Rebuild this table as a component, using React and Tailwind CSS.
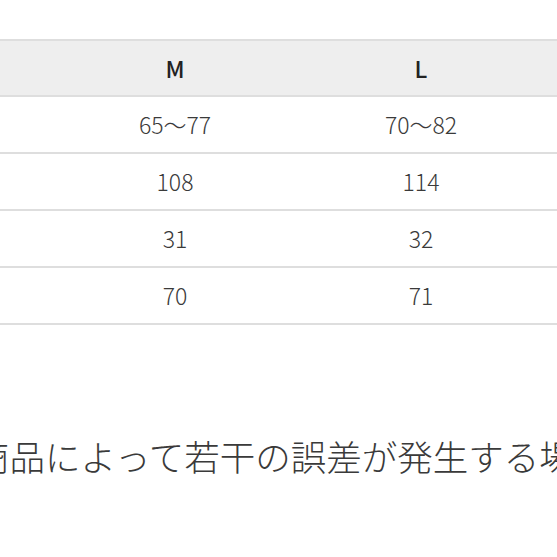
const rows = [
  ["65〜77", "70〜82"],
  ["108", "114"],
  ["31", "32"],
  ["70", "71"],
];

export default function App() {
  return (
    <div
      className="w-[557px] h-[557px] overflow-hidden bg-white text-[#3a3a3a]"
      style={{ fontFamily: '"Noto Sans CJK JP", "Noto Sans", sans-serif' }}
    >
      <div className="pt-[39px]">
        <div className="border-t-2 border-[#dedede]">
          {/* header */}
          <div className="grid grid-cols-[52px_246px_246px_1fr] h-[56px] items-center bg-[#eeeeee] border-b-2 border-[#dedede] text-[23px] font-medium text-[#222]">
            <div />
            <div className="text-center">M</div>
            <div className="text-center">L</div>
            <div />
          </div>
          {rows.map((r, i) => (
            <div
              key={i}
              className="grid grid-cols-[52px_246px_246px_1fr] h-[57px] items-center border-b-2 border-[#dedede] text-[23px] font-light"
            >
              <div />
              <div className="text-center">{r[0]}</div>
              <div className="text-center">{r[1]}</div>
              <div />
            </div>
          ))}
        </div>
        <div className="mt-[113px] -ml-[26px] whitespace-nowrap text-[35.5px] leading-none font-light">
          商品によって若干の誤差が発生する場合がございます。
        </div>
      </div>
    </div>
  );
}
